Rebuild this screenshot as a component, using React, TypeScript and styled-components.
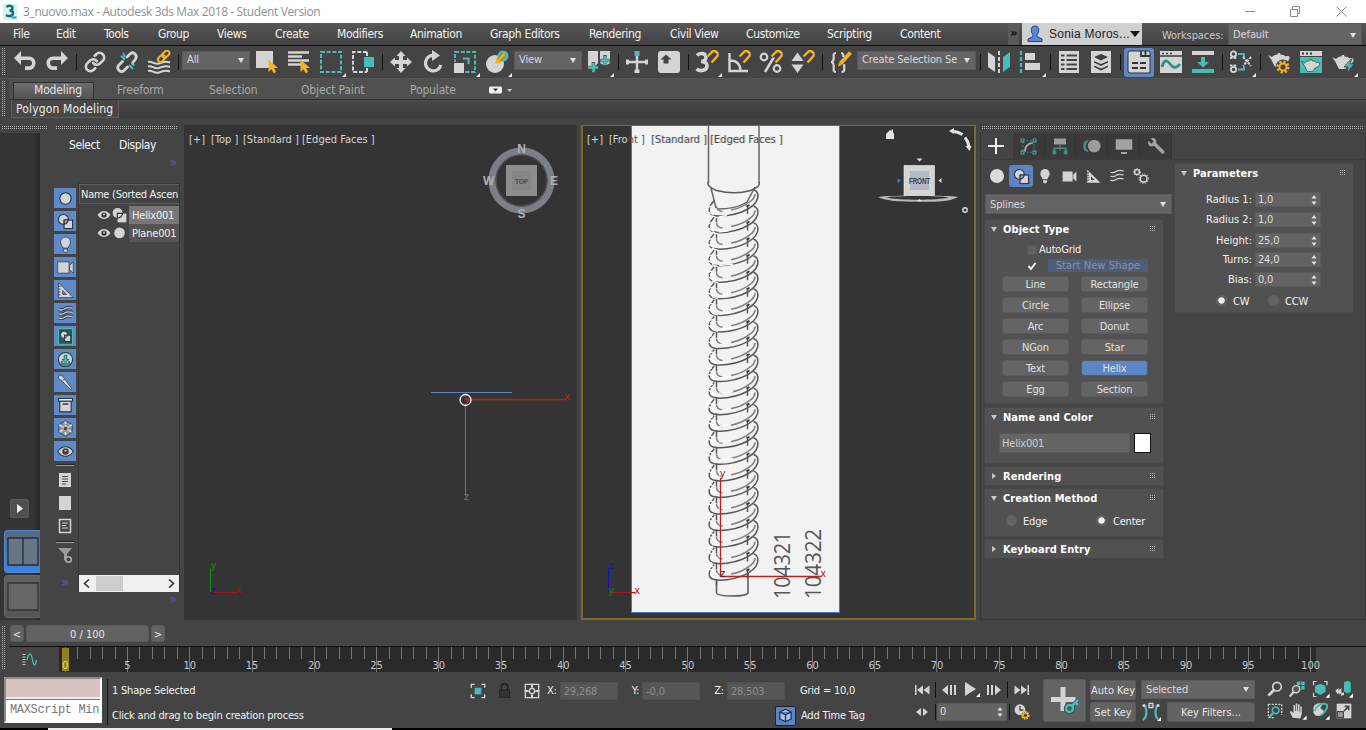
import React from 'react';
import styled, { createGlobalStyle, css } from 'styled-components';
import { Link as LinkIcon } from 'lucide-react';

const L = '#d4d4d4';
const TEAL = '#48bdb5';
const ORANGE = '#f2b326';
const UI = "'DejaVu Sans Condensed', 'DejaVu Sans', 'Noto Sans', sans-serif";

const Global = createGlobalStyle`
  * { box-sizing: border-box; }
  body { margin: 0; background: #444; overflow: hidden; }
  svg { display: block; flex: none; }
`;

const Page = styled.div`
  width: 1366px;
  height: 730px;
  display: flex;
  flex-direction: column;
  overflow: hidden;
  background: #444;
  color: #e6e6e6;
  font-family: ${UI};
  font-size: 11px;
  letter-spacing: -0.2px;
  line-height: 14px;
  white-space: nowrap;
`;

/* ---------- title bar ---------- */
const TitleBar = styled.header`
  height: 23px;
  flex: none;
  display: flex;
  align-items: center;
  background: #fff;
  color: #8f8f8f;
  font-family: 'Open Sans', 'Noto Sans', sans-serif;
  font-size: 12px;
  letter-spacing: -0.37px;
  padding-left: 2px;
`;
const TitleText = styled.span`
  margin-left: 5px;
  flex: 1;
`;
const WinButtons = styled.div`
  display: flex;
  width: 140px;
  height: 20px;
`;

/* ---------- menu bar ---------- */
const MenuBar = styled.nav`
  height: 23px;
  flex: none;
  display: flex;
  align-items: center;
  padding-left: 13px;
  background: linear-gradient(#575757, #424242);
  border-bottom: 1px solid #0c0c0c;
  color: #f2f2f2;
  font-size: 12px;
  letter-spacing: -0.35px;
`;
const MenuItem = styled.span<{ $w: number }>`
  width: ${p => p.$w}px;
  flex: none;
`;
const More = styled.span`
  width: 11px;
  height: 22px;
  background: #5a5a5a;
  font-weight: 700;
  font-size: 13px;
  line-height: 19px;
  text-align: center;
  color: #111;
  margin-right: 3px;
`;
const User = styled.span`
  width: 120px;
  height: 22px;
  background: #d0d0d0;
  color: #1c1c22;
  display: flex;
  align-items: center;
  padding-left: 4px;
  font-family: 'Liberation Sans', sans-serif;
  font-size: 12px;
  letter-spacing: 0.25px;
`;
const Workspaces = styled.span`
  margin-left: 20px;
  width: 66px;
  color: #c9c9c9;
  font-size: 11px;
  letter-spacing: -0.1px;
  padding-top: 3px;
`;

const Combo = styled.div<{ $w: number; $h?: number; $ml?: number; $mr?: number; $up?: number; $pt?: number }>`
  width: ${p => p.$w}px;
  height: ${p => p.$h || 19}px;
  margin: 0 ${p => p.$mr ?? 0}px ${p => p.$up ?? 0}px ${p => p.$ml ?? 0}px;
  flex: none;
  display: flex;
  align-items: center;
  justify-content: space-between;
  padding: ${p => p.$pt ?? 0}px 5px 0 4px;
  background: #646464;
  border: 1px solid #5a5a5a;
  color: #dadada;
  font-size: 11px;
  letter-spacing: -0.1px;
  overflow: hidden;
  &::after {
    content: '';
    border: 3.5px solid transparent;
    border-top: 5px solid #e0e0e0;
    border-bottom: 0;
    flex: none;
  }
`;

/* ---------- main toolbar ---------- */
const vgrip = css`
  background:
    repeating-linear-gradient(0deg, #444 0 1px, transparent 1px 2px),
    repeating-linear-gradient(90deg, #b0b0b0 0 1px, #444 1px 2px);
`;
const VGrip = styled.i<{ $h: number; $mt?: number }>`
  width: 4px;
  height: ${p => p.$h}px;
  margin-top: ${p => p.$mt ?? 0}px;
  flex: none;
  ${vgrip}
`;
const HGrip = styled.i<{ $w: number; $ml: number }>`
  width: ${p => p.$w}px;
  height: 4px;
  margin-left: ${p => p.$ml}px;
  flex: none;
  ${vgrip}
`;
const Toolbar = styled.div`
  height: 33px;
  flex: none;
  display: flex;
  align-items: center;
  padding-left: 2px;
  border-bottom: 1px solid #555;
`;
const ToolRow = styled.div`
  display: flex;
  height: 33px;
  margin-left: 3px;
  align-items: center;
`;
const Slot = styled.div<{ $on?: boolean; $corner?: boolean }>`
  width: 32px;
  height: 31px;
  flex: none;
  display: flex;
  align-items: center;
  justify-content: center;
  position: relative;
  &::before {
    content: '';
    position: absolute;
    inset: 1px 1px 1px 1px;
    border-radius: 3px;
    background: ${p => (p.$on ? '#5f88c4' : 'none')};
  }
  svg { position: relative; }
  ${p => p.$corner && css`
    &::after {
      content: '';
      position: absolute;
      right: 1px;
      bottom: 1px;
      border: 2px solid #eee;
      border-top-color: transparent;
      border-left-color: transparent;
    }
  `}
`;
const Sep = styled.i<{ $h?: number; $w?: number }>`
  width: ${p => p.$w ?? 6}px;
  height: ${p => p.$h ?? 16}px;
  flex: none;
  background: linear-gradient(#111, #111) center / 1px 100% no-repeat;
`;

/* ---------- ribbon ---------- */
const Ribbon = styled.div`
  height: 39px;
  flex: none;
  display: flex;
  padding: 0 0 0 2px;
`;
const RibbonBody = styled.div`
  flex: 1;
  margin-left: 3px;
`;
const TabRow = styled.div`
  height: 21px;
  display: flex;
  background: #505050;
  border-bottom: 1px solid #303030;
  color: #a9a9a9;
  font-size: 12px;
  letter-spacing: -0.15px;
  line-height: 22px;
`;
const Tab = styled.span<{ $w: number; $pl?: number; $on?: boolean }>`
  width: ${p => p.$w}px;
  padding-left: ${p => p.$pl ?? 0}px;
  flex: none;
  ${p => p.$on && css`
    height: 17px;
    margin-top: 3px;
    margin-left: 4px;
    line-height: 15px;
    color: #e2e2e2;
    background: linear-gradient(#6d6d6d, #535353);
    border: 1px solid #303030;
    border-bottom: 0;
  `}
`;
const RibbonPanels = styled.div`
  height: 18px;
  background: linear-gradient(#494949, #3a3a3a);
  display: flex;
`;
const RibbonPanel = styled.span`
  width: 108px;
  margin-left: 2px;
  padding-left: 4px;
  border: 1px solid #5e5e5e;
  border-top: 0;
  background: #474747;
  font-size: 12px;
  letter-spacing: 0.15px;
  line-height: 19px;
  color: #ececec;
`;

/* ---------- work area ---------- */
const Work = styled.main`
  height: 502px;
  flex: none;
  display: flex;
`;
const LeftDock = styled.div`
  width: 184px;
  display: flex;
  flex-direction: column;
`;
const Grips = styled.div`
  display: flex;
  padding-top: 8px;
  height: 15px;
`;
const DockCols = styled.div`
  flex: 1;
  display: flex;
`;
const LayoutStrip = styled.div`
  width: 40px;
  height: 487px;
  background: linear-gradient(90deg, #343434 80%, #292929);
  display: flex;
  flex-direction: column;
  align-items: flex-end;
  justify-content: flex-end;
  gap: 2px;
  padding-bottom: 2px;
`;
const PlayTab = styled.div`
  width: 19px;
  height: 19px;
  margin: 0 11px 10px 0;
  border-radius: 2px;
  background: #505050;
  border: 1px solid #5a5a5a;
  display: flex;
  align-items: center;
  justify-content: center;
`;
const LayoutButton = styled.div<{ $on?: boolean }>`
  width: 36px;
  height: 43px;
  border-radius: 4px 0 0 4px;
  border: 1px solid ${p => (p.$on ? '#4d8ad8' : '#666')};
  border-right: 0;
  background: ${p => (p.$on ? 'linear-gradient(#57687e, #3f83dd)' : 'linear-gradient(#606060, #555)')};
  padding: 6px 0 0 2px;
`;
const Explorer = styled.div`
  width: 144px;
  padding-left: 14px;
  display: flex;
  flex-direction: column;
`;
const ExplorerHead = styled.div`
  display: flex;
  padding: 5px 0 0 15px;
  height: 24px;
  font-size: 12px;
  letter-spacing: -0.4px;
  color: #f4f4f4;
  span { width: 50px; }
`;
const Chevrons = styled.span<{ $h: number; $pr: number }>`
  height: ${p => p.$h}px;
  text-align: right;
  padding-right: ${p => p.$pr}px;
  color: #5a57b4;
  font-size: 14px;
  line-height: 11px;
  flex: none;
`;
const ExplorerBody = styled.div`
  display: flex;
  height: 409px;
  margin-bottom: 2px;
`;
const FilterCol = styled.div`
  width: 22px;
  margin-right: 2px;
  padding-top: 5px;
  display: flex;
  flex-direction: column;
  align-items: center;
`;
const Filter = styled.div`
  width: 22px;
  height: 20px;
  margin-bottom: 3px;
  flex: none;
  background: #5e8ac7;
  display: flex;
  align-items: center;
  justify-content: center;
`;
const Rule = styled.i`
  width: 18px;
  height: 2px;
  margin-bottom: 1px;
  flex: none;
  border-top: 1px solid #222;
  background: #a0a0a0;
`;
const FilterFoot = styled.div`
  display: flex;
  flex-direction: column;
  align-items: center;
  gap: 11px;
`;
const List = styled.div`
  width: 102px;
  border: 1px solid #363636;
  border-bottom: 0;
  display: flex;
  flex-direction: column;
`;
const ListHead = styled.div`
  height: 20px;
  margin: 0 0 2px;
  border: 1px solid #606060;
  border-right: 0;
  padding-left: 1px;
  line-height: 19px;
  color: #f1f1f1;
  letter-spacing: -0.26px;
`;
const ListRow = styled.div`
  height: 18px;
  display: flex;
  align-items: center;
  padding-left: 18px;
`;
const ListName = styled.span<{ $on?: boolean }>`
  margin-left: 2px;
  flex: 1;
  height: 18px;
  padding-left: 3px;
  line-height: 19px;
  color: #f1f1f1;
  background: ${p => (p.$on ? '#787878' : '#555')};
`;
const HScroll = styled.div`
  margin-top: auto;
  height: 17px;
  background: #f0f0f0;
  display: flex;
  align-items: center;
  justify-content: space-between;
  padding: 0 4px;
  flex: none;
`;
const Thumb = styled.i`
  width: 27px;
  height: 15px;
  background: #cdcdcd;
  margin-right: 39px;
`;

const Views = styled.div`
  display: flex;
  gap: 4px;
  width: 796px;
  height: 495px;
  margin-top: 7px;
`;
const Viewport = styled.section<{ $w: number; $on?: boolean }>`
  width: ${p => p.$w}px;
  height: 495px;
  flex: none;
  position: relative;
  background: #343434;
  overflow: hidden;
  ${p => p.$on && css`
    &::after {
      content: '';
      position: absolute;
      inset: 0;
      border: 2px solid #7d6b28;
      border-top-width: 1px;
    }
  `}
`;
const ViewLabel = styled.div<{ $x: number }>`
  position: absolute;
  left: ${p => p.$x}px;
  top: 8px;
  display: flex;
  gap: 2px;
  color: #d6d6d6;
  letter-spacing: 0;
`;
const ViewPart = styled.span<{ $w: number; $dark?: boolean }>`
  width: ${p => p.$w}px;
  ${p => p.$dark && css`color: #4e4e4e; text-shadow: 1px 0 0 rgba(120, 120, 120, .35);`}
`;
const OnWhite = styled.span`
  color: #4e4e4e;
`;

/* ---------- command panel ---------- */
const Command = styled.aside`
  width: 386px;
  display: flex;
  flex-direction: column;
`;
const PanelFrame = styled.div`
  height: 487px;
  border: 1px solid #383838;
  border-top: 0;
`;
const ModeTabs = styled.div`
  display: flex;
  height: 26px;
  width: 191px;
`;
const ModeTab = styled.div<{ $on?: boolean }>`
  width: 32px;
  height: 26px;
  display: flex;
  align-items: center;
  justify-content: center;
  background: ${p => (p.$on ? '#444' : '#3a3a3a')};
  border-right: 1px solid ${p => (p.$on ? '#444' : '#333')};
`;
const PanelCols = styled.div`
  display: flex;
  border-top: 1px solid #3c3c3c;
`;
const CreateCol = styled.div`
  width: 190px;
  padding-left: 4px;
`;
const CategoryRow = styled.div`
  display: flex;
  padding: 5px 0 0 0;
  height: 34px;
`;
const Category = styled.div<{ $on?: boolean }>`
  width: 24px;
  height: 22px;
  border-radius: 3px;
  display: flex;
  align-items: center;
  justify-content: center;
  background: ${p => (p.$on ? '#5b85c4' : 'none')};
`;
const RolloutStack = styled.div`
  padding-top: 5px;
`;
const Rollout = styled.section<{ $h: number; $mb?: number }>`
  width: 180px;
  height: ${p => p.$h}px;
  margin-bottom: ${p => p.$mb ?? 4}px;
  margin-left: -1px;
  background: #515151;
  border: 1px solid #484848;
  border-radius: 2px;
  overflow: hidden;
`;
const RolloutTitle = styled.h3<{ $closed?: boolean }>`
  margin: 0;
  height: 19px;
  display: flex;
  align-items: center;
  font-size: 11px;
  font-weight: 700;
  letter-spacing: 0.08px;
  color: #fff;
  padding: 1px 7px 0 6px;
  &::before {
    content: '';
    width: 0;
    height: 0;
    margin: -2px 6px 0 0;
    border: 3px solid transparent;
    ${p => p.$closed
      ? css`border-left: 4px solid #c4c4c4; border-right: 0; margin-left: 1px; margin-right: 7px;`
      : css`border-top: 5px solid #c4c4c4; border-bottom: 0;`}
  }
  &::after {
    content: '';
    margin-left: auto;
    margin-top: -3px;
    width: 6px;
    height: 6px;
    background:
      repeating-linear-gradient(0deg, #515151 0 1px, transparent 1px 2px),
      repeating-linear-gradient(90deg, #b5b5b5 0 1px, #515151 1px 2px);
  }
`;
const CheckRow = styled.div<{ $h: number }>`
  display: flex;
  align-items: center;
  height: ${p => p.$h}px;
  padding-left: 42px;
  color: #f2f2f2;
`;
const Check = styled.i`
  width: 10px;
  height: 10px;
  margin-right: 2px;
  background: #616161;
  border: 1px solid #585858;
`;
const StartShape = styled.span`
  width: 100px;
  height: 13px;
  margin-left: 11px;
  border-radius: 2px;
  background: #4d5e7b;
  color: #8a919c;
  text-align: center;
  line-height: 13px;
  letter-spacing: 0.1px;
`;
const TypeGrid = styled.div`
  display: grid;
  grid-template-columns: 67px 67px;
  grid-auto-rows: 16px;
  column-gap: 12px;
  row-gap: 5px;
  padding: 5px 0 0 17px;
`;
const TypeButton = styled.button<{ $on?: boolean }>`
  border: 1px solid #5a5a5a;
  border-radius: 3px;
  padding: 0;
  font: 11px/15px ${UI};
  letter-spacing: -0.15px;
  color: #e0e0e0;
  background: ${p => (p.$on ? '#5b85c4' : '#646464')};
`;
const NameRow = styled.div`
  display: flex;
  padding: 6px 0 0 14px;
`;
const NameField = styled.div`
  width: 131px;
  height: 20px;
  margin-right: 4px;
  padding-left: 2px;
  background: #656565;
  border: 1px solid #595959;
  color: #cfcfcf;
  line-height: 19px;
`;
const Swatch = styled.div`
  width: 17px;
  height: 20px;
  background: #fff;
  border: 1px solid #111;
`;
const RadioRow = styled.div<{ $pt: number; $pl: number }>`
  display: flex;
  align-items: center;
  padding: ${p => p.$pt}px 0 0 ${p => p.$pl}px;
  color: #f2f2f2;
`;
const Radio = styled.label<{ $on?: boolean; $w: number }>`
  width: ${p => p.$w}px;
  display: flex;
  align-items: center;
  gap: 6px;
  &::before {
    content: '';
    width: 11px;
    height: 11px;
    margin-top: -3px;
    border-radius: 50%;
    background: ${p => (p.$on ? 'radial-gradient(circle, #f2f2f2 2.8px, #626262 3.6px)' : '#636363')};
  }
`;
const ParamCol = styled.div`
  width: 184px;
  padding: 3px 0 0 4px;
`;
const Params = styled.div`
  padding-top: 8px;
`;
const ParamRow = styled.div<{ $mb: number }>`
  display: flex;
  align-items: center;
  height: 16px;
  margin-bottom: ${p => p.$mb}px;
`;
const ParamLabel = styled.span`
  width: 78px;
  padding-right: 1px;
  padding-top: 1px;
  text-align: right;
  margin-right: 2px;
  color: #f2f2f2;
  letter-spacing: 0;
`;
const Spinner = styled.div<{ $w: number; $h?: number }>`
  width: ${p => p.$w}px;
  height: ${p => p.$h ?? 15}px;
  flex: none;
  display: flex;
  align-items: center;
  justify-content: space-between;
  padding: 1px 3px 0 2px;
  background: #636363;
  border: 1px solid #5b5b5b;
  color: #dedede;
`;

/* ---------- time line ---------- */
const Timeline = styled.div`
  height: 52px;
  flex: none;
  display: flex;
  padding: 0 0 0 2px;
`;
const TimelineBody = styled.div`
  margin-left: 3px;
  flex: 1;
`;
const SliderRow = styled.div`
  height: 26px;
  display: flex;
  gap: 2px;
  padding: 5px 0 0 1px;
`;
const SliderButton = styled.span<{ $w: number }>`
  width: ${p => p.$w}px;
  height: 17px;
  border-radius: 3px;
  background: #626262;
  border: 1px solid #5a5a5a;
  text-align: center;
  line-height: 17px;
  letter-spacing: 0;
  color: #e6e6e6;
`;
const TrackRow = styled.div`
  height: 26px;
  display: flex;
  border-top: 1px solid #0e0e0e;
`;
const MiniCurve = styled.div`
  width: 50px;
  padding: 6px 0 0 13px;
`;
const Track = styled.div`
  width: 1257px;
  height: 25px;
  display: flex;
  background: #2a2a2a;
`;
const Tick = styled.div<{ $major: boolean; $now: boolean }>`
  width: 12.455px;
  height: 25px;
  flex: none;
  display: flex;
  justify-content: center;
  align-items: flex-end;
  color: #c2c2c2;
  letter-spacing: 0;
  line-height: 13px;
  background:
    linear-gradient(#757575, #757575) center top / 1px ${p => (p.$major ? 25 : 12)}px no-repeat
    ${p => p.$now && ', linear-gradient(#8f8420, #8f8420) center 1px / 7px 23px no-repeat'};
`;
const TickLabel = styled.span<{ $now: boolean }>`
  color: ${p => (p.$now ? '#e8e044' : '#c6c6c6')};
`;

/* ---------- status bar ---------- */
const Status = styled.footer`
  height: 56px;
  flex: none;
  display: flex;
  padding: 7px 0 0 4px;
`;
const Listener = styled.div`
  width: 98px;
  height: 46px;
  margin-top: -2px;
  border: 2px solid #8b8b8b;
  border-right-color: #fff;
  border-bottom-color: #fff;
  display: flex;
  flex-direction: column;
  font: 12px/21px 'Liberation Mono', monospace;
  letter-spacing: -0.35px;
  color: #777;
`;
const ListenerOut = styled.div`
  height: 20px;
  background: #d9c2c2;
  border-bottom: 2px solid #eee;
`;
const ListenerIn = styled.div`
  flex: 1;
  background: #fff;
  border-top: 1px solid #777;
  padding-left: 4px;
`;
const Prompt = styled.div`
  width: 354px;
  padding: 5px 0 0 0;
  display: flex;
  flex-direction: column;
  gap: 11px;
  color: #f2f2f2;
`;
const Coords = styled.div`
  width: 444px;
  padding-top: 2px;
  display: flex;
  flex-direction: column;
  gap: 6px;
`;
const CoordRow = styled.div<{ $pl: number }>`
  display: flex;
  align-items: center;
  height: 19px;
  padding-left: ${p => p.$pl}px;
  color: #f0f0f0;
`;
const Field = styled.span<{ $mr: number }>`
  width: 58px;
  margin: 0 ${p => p.$mr}px 0 3px;
  height: 18px;
  background: #565656;
  border: 1px solid #505050;
  color: #8d8d8d;
  padding-left: 3px;
  line-height: 17px;
`;
const Gap = styled.span<{ $w: number }>`
  width: ${p => p.$w}px;
  flex: none;
  display: flex;
`;
const Playback = styled.div`
  width: 133px;
  display: flex;
  flex-direction: column;
  gap: 1px;
`;
const PlayRow = styled.div`
  display: flex;
  align-items: center;
  height: 21px;
`;
const PlaySlot = styled.span<{ $w: number }>`
  width: ${p => p.$w}px;
  flex: none;
  display: flex;
  justify-content: center;
`;
const BigKey = styled.div`
  width: 43px;
  height: 43px;
  margin-right: 4px;
  background: #646464;
  border: 1px solid #595959;
  border-radius: 2px;
`;
const KeyCol = styled.div<{ $w: number }>`
  width: ${p => p.$w}px;
  display: flex;
  flex-direction: column;
  gap: 2px;
  margin-top: 1px;
`;
const KeyButton = styled.div<{ $w: number }>`
  width: ${p => p.$w}px;
  height: 20px;
  border-radius: 2px;
  background: #636363;
  border: 1px solid #5a5a5a;
  text-align: center;
  line-height: 20px;
  letter-spacing: 0;
`;
const NavGrid = styled.div`
  margin-left: 7px;
  margin-top: -1px;
  display: grid;
  grid-template-columns: repeat(4, 23px);
  grid-auto-rows: 22px;
  place-items: center;
`;
const TagIcon = styled.span`
  width: 21px;
  height: 20px;
  margin-right: 5px;
  display: flex;
  align-items: center;
  justify-content: center;
  background: #5b85c4;
  border: 1px solid #222;
  border-radius: 2px;
`;
const Footer = styled.div`
  height: 2px;
  background: linear-gradient(#ececec, #ececec) 48px 0 / 344px 2px no-repeat #000;
  flex: none;
`;

/* ---------- icon helpers ---------- */
const I = ({ children, s = 24 }: { children: React.ReactNode; s?: number }) => (
  <svg width={s} height={s} viewBox="0 0 24 24" fill="none">{children}</svg>
);
const Cursor = () => <path d="M13.500 9.500v12.500l3-2.700 2 4 2.600-1.300-2-4h4z" fill={ORANGE} />;
const Magnet = () => (
  <g fill="none">
    <path d="M12.500 6.500l4-4a3.300 3.300 0 0 1 5.500 4L16.500 12.500" stroke="#444" strokeWidth="4" />
    <path d="M12.500 6.500l4-4a3.300 3.300 0 0 1 5.500 4L16.500 12.500" stroke={ORANGE} strokeWidth="2.400" />
  </g>
);
const Teapot = () => (
  <path d="M1 5l4 2c2-2 4-2.500 5.500-2.500L11 3h2l.5 1.500c2 0 4 .8 5 2 3-1 4.500 0 4 2-.5 2.500-3 4-5.500 4.500l-2.500 4H8L4.500 10z" fill={L} />
);
const wavePath = (y: number) => `M2 ${y + 1}c4 2.500 6 1 9-1s6-2 11-.500`;
const Curve = () => (
  <g stroke={L} strokeWidth="1.800">{[5, 11, 17].map(y => <path key={y} d={wavePath(y)} />)}</g>
);
const Shapes = ({ dark = '#263042' }: { dark?: string }) => (
  <g>
    <circle cx="9" cy="9" r="7" fill={L} stroke={dark} strokeWidth="1.500" />
    <rect x="10" y="10" width="12" height="12" fill={L} stroke={dark} strokeWidth="1.500" />
    <path d="M10 15.800A7 7 0 0 0 15.800 10H10z" fill="#8ba8d0" stroke={dark} strokeWidth="1.500" />
  </g>
);
const ShapesSmall = () => (
  <g>
    <circle cx="9" cy="8" r="8" fill={L} />
    <rect x="9" y="9" width="14" height="14" fill={L} />
    <path d="M8.500 16A8 8 0 0 0 17 8.500H8.500z" fill={L} stroke="#333" strokeWidth="1.800" />
  </g>
);
const Bulb = ({ d = 'none' }: { d?: string }) => (
  <g fill={L} stroke={d}>
    <path d="M12 1.500a7 7 0 0 0-7 7c0 3 2 4.500 3.500 8.500h7c1.500-4 3.500-5.500 3.500-8.500a7 7 0 0 0-7-7z" />
    <path d="M9 18.500h6v3l-2 1.500h-2l-2-1.500z" />
  </g>
);
const Camera = ({ d = 'none' }: { d?: string }) => (
  <g fill={L} stroke={d}><path d="M1 4h16v16H1z" /><path d="M18 9l5-5v16l-5-5z" /></g>
);
const Ruler = ({ d = 'none' }: { d?: string }) => (
  <g>
    <path d="M2 1v21h21zM8 12l5.500 5.500H8z" fill={L} fillRule="evenodd" stroke={d} />
    <path d="M2 6h3M2 10h3M2 14h3M2 18h3" stroke="#444" strokeWidth="1.400" />
  </g>
);
const Eye = ({ d = 'none' }: { d?: string }) => (
  <g><path d="M1 12c6-9 16-9 22 0-6 9-16 9-22 0z" fill={L} stroke={d} strokeWidth="1.500" /><circle cx="12" cy="12" r="4.500" fill="#3c3c3c" /><circle cx="12" cy="11" r="1.500" fill={L} /></g>
);
const UpDown = () => (
  <svg width="6" height="10" viewBox="0 0 6 10"><path d="M3 0L5.500 3.500H.5zM3 10L.5 6.500h5z" fill="#e2e2e2" /></svg>
);

const toolGroups: React.ReactNode[] = [
  <>
    <Slot><I><path d="M8 1v5.500h8c4 0 6.500 3 6.500 6.500s-2.500 7-6.500 7h-4v-3.800h4c2 0 3-1.400 3-3.200s-1-3-3-3H8V15L1 8z" fill={L} /></I></Slot>
    <Slot><I><path d="M16 1v5.500H8c-4 0-6.500 3-6.500 6.500S4 20 8 20h4v-3.800H8c-2 0-3-1.400-3-3.200s1-3 3-3h8V15l7-7z" fill={L} /></I></Slot>
  </>,
  <>
    <Slot><LinkIcon size={22} color={L} strokeWidth={2.900} /></Slot>
    <Slot><I><g stroke={L} strokeWidth="2.800" strokeLinecap="round"><path d="M12 7l3-3c3-3 8 1 5.500 5l-3 4M12.500 17l-3.500 3.500c-3 3-8-1.500-5.500-5l4-4" /></g><path d="M6 6l4 3.500M8 3l2 4M14 15l4 4M16.500 14l3 1" stroke={TEAL} strokeWidth="2" /></I></Slot>
    <Slot><I><g stroke={L} strokeWidth="2">{[12, 16.5, 21].map(y => <path key={y} d={`M1 ${y}c4-1.500 6 3 11 1.500s6-3 11-1`} />)}</g><g transform="rotate(-45 17 6)" stroke={ORANGE} strokeWidth="2"><rect x="9.500" y="3.500" width="8" height="5" rx="2.500" fill="#444" /><rect x="15.500" y="3.500" width="8" height="5" rx="2.500" /></g></I></Slot>
  </>,
  <>
    <Combo $w={68} $ml={1} $mr={1} $up={4}>All</Combo>
    <Slot><I><path d="M1 1h17v17H1z" fill={L} /><Cursor /></I></Slot>
    <Slot><I><path d="M1 2.500h21M1 6.500h14M1 10.500h21M1 14.500h14" stroke={L} strokeWidth="2.600" /><Cursor /></I></Slot>
    <Slot $corner><I><rect x="2" y="2" width="20" height="20" stroke={TEAL} strokeWidth="2" strokeDasharray="4 1.700" /></I></Slot>
    <Slot><I><path d="M16 2H2v20h14M16 2v4M16 22v-4" stroke={L} strokeWidth="2" strokeDasharray="4 1.700" /><path d="M13 7h10v10H13z" fill={TEAL} /></I></Slot>
  </>,
  <>
    <Slot><I><path d="M12 1l4.500 5H14v4h4V7.500l5 4.500-5 4.500V14h-4v4h2.500L12 23l-4.500-5H10v-4H6v2.500L1 12l5-4.500V10h4V6H7.500z" fill={L} /></I></Slot>
    <Slot><I><path d="M14 5.500A7.800 7.800 0 1 0 19.800 15" stroke={L} strokeWidth="3.200" /><path d="M11 0l8 5.500-8 5.500z" fill={L} /></I></Slot>
    <Slot $corner><I><rect x="2" y="2" width="20" height="20" stroke={TEAL} strokeWidth="2" strokeDasharray="4 1.700" /><path d="M0 12h12v12H0z" fill="#444" /><path d="M1 13h10v10H1z" fill={L} /><path d="M10 8.500h5.500V14" stroke={TEAL} strokeWidth="2" /></I></Slot>
    <Slot $corner><I><circle cx="10" cy="14" r="9" fill={L} /><circle cx="18" cy="6" r="5.500" fill={TEAL} /><path d="M19 4l-6 7" stroke="#b47b00" strokeWidth="4.500" /><path d="M19.500 3.500l-6 7" stroke={ORANGE} strokeWidth="2.500" /><path d="M10 14l1.500-6 5 4.500z" fill={ORANGE} /></I></Slot>
    <Combo $w={68} $ml={1} $mr={1} $up={4}>View</Combo>
    <Slot $corner><I><path d="M1 1h10v12l-5 6H1zM13 1h10v12l-5 3-5-3z" fill={L} /><path d="M6.500 12v11M1.500 17.500h10M18 5v11M12.500 10.500h11" stroke="#555" strokeWidth="3.600" /><path d="M6.500 13v9M2 17.500h9M18 6v9M13.500 10.500h9" stroke={TEAL} strokeWidth="2.500" /></I></Slot>
  </>,
  <>
    <Slot><I><path d="M12 6v16M2 12h20" stroke={L} strokeWidth="2.400" /><path d="M9.500 19.500h5V23h-5zM1 9.500h3v5H1zM20 9.500h3v5h-3z" fill={L} /><path d="M9.500 1h5v5h-5z" fill={TEAL} /></I></Slot>
    <Slot><I><rect x="1" y="1" width="22" height="22" rx="3" fill={L} /><path d="M9 4.500l5.500 5h-3v4h-5v-4h-3z" fill="#444" /></I></Slot>
  </>,
  <>
    <Slot $corner><I><path d="M2 5.500c3-3.500 9-2 9 1.500 0 3-2.500 4.500-5 4.500 3 0 6 1 6 4.500 0 4.500-6.500 6-10.500 3" stroke={L} strokeWidth="3.600" /><Magnet /></I></Slot>
    <Slot><I><path d="M2.500 3v18H21M3 10.500c7 0 10.500 4 10.500 10.500" stroke={L} strokeWidth="2.400" /><Magnet /></I></Slot>
    <Slot><I><circle cx="5" cy="7" r="3.300" stroke={L} strokeWidth="2.200" /><circle cx="18" cy="18.500" r="3.300" stroke={L} strokeWidth="2.200" /><path d="M6 22L15 7" stroke={L} strokeWidth="2.500" /><Magnet /></I></Slot>
    <Slot><I><path d="M6.500 2.500l6 8.500H.5zM6.500 23l6-8.500H.5z" fill={L} /><Magnet /></I></Slot>
  </>,
  <>
    <Slot><I><path d="M7 3C3 3 5.500 7 4.500 9.500 4 11.500 2.500 12 2 12c.5 0 2 .5 2.500 2.500C5.500 17 3 22 7 22M12 3c2 0 2.500 1.500 2.300 4M12.500 22c5 0 1.500-5 3-8" stroke={L} strokeWidth="2.200" /><path d="M21.500 2.500l-10 11" stroke={ORANGE} strokeWidth="4" /><path d="M9 16.500l1-4 3 2.500z" fill={ORANGE} /></I></Slot>
    <Combo $w={119} $ml={0} $mr={1} $up={4}>Create Selection Se</Combo>
  </>,
  <>
    <Slot><I><path d="M1 2l7 5v15l-7-5z" fill={L} /><path d="M23 2l-7 5v15l7-5z" fill={TEAL} /><path d="M12 1v22" stroke={L} strokeWidth="2" strokeDasharray="4 2" /></I></Slot>
    <Slot $corner><I><path d="M2 1v22" stroke={TEAL} strokeWidth="2.200" strokeDasharray="4 2" /><path d="M6 3h10v7H6zM6 13h15v7H6z" fill={L} /></I></Slot>
  </>,
  <>
    <Slot><I><path d="M2 1h20v22H2z" fill={L} /><path d="M4 5.500h3.500M9.500 5.500H20M4 10h3.500M9.500 10H20M4 14.500h3.500M9.500 14.500H20M4 19h3.500M9.500 19H20" stroke="#444" strokeWidth="2.200" /></I></Slot>
    <Slot><I><path d="M2 1h20v22H2z" fill={L} /><path d="M12 4l7 3-7 3.500L5 7zM5 11l7 3 7-3v1.500L12 16l-7-3.500zM5 15.500l7 3 7-3V17l-7 3.500L5 17z" fill="#3d3d3d" /></I></Slot>
  </>,
  <>
    <Slot $on><I><path d="M1 3a2 2 0 0 1 2-2h18a2 2 0 0 1 2 2v20H3a2 2 0 0 1-2-2z" fill={L} stroke="#333" /><path d="M14 1v5h9M18.500 1v5M5 13h6M13 13h6M5 18h6M13 18h6" stroke="#333" strokeWidth="1.800" /></I></Slot>
    <Slot><I><path d="M1 1h22v22H1z" fill={L} /><path d="M1 6h22M3 3.500h2M7 3.500h2M11 3.500h2" stroke="#3d3d3d" strokeWidth="1.700" /><path d="M3 17c2-8 5-7 8-3s6 5 10 0" stroke="#2b8f89" strokeWidth="2.800" /></I></Slot>
    <Slot><I><path d="M1 1h22v4H1z" fill={L} /><path d="M1 19h22v4H1zM10 7h4v5h4l-6 5.500L6 12h4z" fill={TEAL} /></I></Slot>
  </>,
  <>
    <Slot $corner><I><g fill="#444" stroke={L} strokeWidth="1.800"><circle cx="4.500" cy="4" r="2.600" /><circle cx="4.500" cy="19.500" r="2.600" /></g><path d="M9 4h6v3M9 19.500h6v-3" stroke={TEAL} strokeWidth="2" /><path d="M14 7l8 9M22 7l-8 9M1 8l7 0M1 15.500h7" stroke={L} strokeWidth="2" strokeDasharray="2.500 1.200" /></I></Slot>
  </>,
  <>
    <Slot><I><Teapot /><circle cx="16" cy="17" r="4.500" stroke="#444" strokeWidth="6" /><circle cx="16" cy="17" r="5.400" stroke={ORANGE} strokeWidth="2.400" strokeDasharray="2.200 2" /><circle cx="16" cy="17" r="3.600" stroke={ORANGE} strokeWidth="2" /></I></Slot>
    <Slot><I><path d="M1 1h22v5H1z" fill={L} /><path d="M3 3.500h2M7 3.500h2M11 3.500h2" stroke="#333" strokeWidth="1.800" /><path d="M1 7h22v16H1z" fill={TEAL} /><g transform="translate(1.500 7) scale(.85)" stroke="#333" strokeWidth=".8"><Teapot /></g></I></Slot>
    <Slot $corner><I><g transform="translate(0 2)"><Teapot /></g><path d="M20 9l-7 8h4l-1 6 7-9h-4l2-5z" fill={TEAL} stroke="#444" strokeWidth=".8" /></I></Slot>
  </>,
];

const menus: [string, number][] = [
  ['File', 43], ['Edit', 48], ['Tools', 54], ['Group', 59], ['Views', 58], ['Create', 62], ['Modifiers', 73],
  ['Animation', 80], ['Graph Editors', 99], ['Rendering', 81], ['Civil View', 76], ['Customize', 81],
  ['Scripting', 73], ['Content', 108],
];

const filters: React.ReactNode[] = [
  <circle cx="12" cy="12" r="8" fill={L} stroke="#263042" strokeWidth="1.500" />,
  <Shapes />,
  <Bulb d="#263042" />,
  <Camera d="#263042" />,
  <Ruler d="#263042" />,
  <><g stroke="#263042" strokeWidth="4.200">{[5, 11, 17].map(y => <path key={y} d={wavePath(y)} />)}</g><Curve /></>,
  <><rect x="2" y="1" width="20" height="22" fill="#2c5560" stroke={TEAL} strokeWidth="1.500" /><g transform="translate(3.500 3) scale(.72)"><Shapes dark="#222" /></g></>,
  <><circle cx="12" cy="12" r="10" fill={L} stroke="#263042" strokeWidth="1.500" /><path d="M10 6h4v6h3l-5 5-5-5h3zM6 15v5h12v-5h-2v3H8v-3z" fill={TEAL} stroke="#1d4d4a" /></>,
  <path d="M3 1l5 2 3 4 10 14-2 1L7 10 2 6zM8 9l3-2" fill={L} stroke="#263042" />,
  <><path d="M2 2h20v4H2z" fill="#eee" stroke="#263042" strokeWidth="1.500" /><path d="M4 6h16v15H4z" fill={L} stroke="#263042" strokeWidth="1.500" /><path d="M8 10h8" stroke="#263042" strokeWidth="2" /></>,
  <><path d="M12 1l9.500 5.500v11L12 23l-9.500-5.500v-11z" fill="#8a8f96" stroke="#263042" /><path d="M12 2v20M3 7l18 10M21 7L3 17" stroke="#e2e2e2" strokeWidth="2.500" strokeDasharray="4 1" /><circle cx="12" cy="12" r="3" fill="#555" /></>,
  <Eye d="#263042" />,
];

const types = ['Line', 'Rectangle', 'Circle', 'Ellipse', 'Arc', 'Donut', 'NGon', 'Star', 'Text', 'Helix', 'Egg', 'Section'];

const params: [string, string, number][] = [
  ['Radius 1:', '1,0', 4], ['Radius 2:', '1,0', 5], ['Height:', '25,0', 3], ['Turns:', '24,0', 4], ['Bias:', '0,0', 0],
];

/* Threaded rod: 23 turns, one every 16.55 units, each with a lobe on both sides. */
const Screw = () => (
  <g fill="none" stroke="#585858" strokeWidth="1.500">
    <path d="M708.500 126v57M759 126v57" stroke="#666" />
    <path d="M708.500 182c-2 3 2 6 8 8.500 12 3 24 3 34 0 8-3 10-6 8.500-8.500" />
    <path d="M711 188l5 20M755 187l-8 15c-6 4-16 7-30 7" stroke="#666" />
    {Array.from({ length: 23 }, (_, i) => (
      <g key={i} transform={`translate(0 ${197 + i * 16.55})`}>
        <path d="M753.500 -7.500c4 1.500 5 4.500 4.200 8.500-1.500 6-7 10.500-16 14-9 3.500-21 5-27.500 3.500-6-1.500-6-6-3.500-10.500l3.500-4.500" />
        <path d="M716.500 9c0 3 2 5 6 5.500M731 13c9-1.500 15-5 20.500-9.500 2.500-2 3.500-4 3.500-6.500" stroke="#808080" />
        <path d="M716.500 18v7M747.500 9v8" />
        <path d="M746.500 9.500l3-1.500" stroke="#333" strokeWidth="1.800" />
      </g>
    ))}
    <path d="M716.500 581v12c2 4 29 4 31.500 0v-20" />
  </g>
);
const HelixSpline = () => (
  <g fill="none" stroke="#fff" strokeWidth="1.300">
    {Array.from({ length: 23 }, (_, i) => {
      const y = 208 + i * 16.2;
      return <path key={i} d={`M${706 + (i % 2)} ${y}l6-2M${708} ${y + 4}l6 3M712 ${y + 8}l6 2M719 ${y + 9 - (i % 3)}l${8 + (i % 4) * 2} -1.500M710 ${y + 1}l4 2`} />;
    })}
  </g>
);

const AxisText = ({ x, y, c, children }: { x: number; y: number; c: string; children: string }) => (
  <text x={x} y={y} fill={c} fontSize="11" textAnchor="middle" fontFamily={UI}>{children}</text>
);

const TopView = () => (
  <Viewport $w={393}>
    <svg width="393" height="495" viewBox="184 125 393 495" fill="none">
      <circle cx="521.500" cy="180.500" r="29.500" stroke="#7c7f83" strokeWidth="7" />
      <circle cx="521.500" cy="180.500" r="25.500" stroke="#505459" strokeWidth="1.200" />
      <g fill="#a9b2b3" fontSize="12" fontWeight="700" textAnchor="middle" fontFamily="Liberation Sans, sans-serif">
        <text x="521.500" y="153">N</text><text x="521.500" y="218">S</text><text x="488.500" y="185">W</text><text x="554" y="185">E</text>
      </g>
      <path d="M506 165h31v31h-31z" fill="#8d8d8d" />
      <path d="M512 171h19v19h-19z" fill="#85858a" />
      <text x="521.500" y="183.500" fill="#4c4c50" fontSize="8" fontWeight="700" textAnchor="middle" fontFamily="Liberation Sans, sans-serif" textLength="13" lengthAdjust="spacingAndGlyphs">TOP</text>
      <path d="M431 392.500h81" stroke="#5c82c8" />
      <path d="M465.500 404v92" stroke="#747474" />
      <path d="M465 399.500h102" stroke="#b32121" strokeWidth="1.300" />
      <AxisText x={567} y={400} c="#c22222">x</AxisText>
      <AxisText x={466.500} y={500} c="#777">z</AxisText>
      <AxisText x={467} y={402} c="#c22222">y</AxisText>
      <circle cx="465.500" cy="400" r="5.500" stroke="#fff" strokeWidth="1.300" />
      <path d="M210.500 568v24" stroke="#178a17" /><path d="M212 592.500h26" stroke="#a31515" />
      <AxisText x={213.500} y={569} c="#178a17">y</AxisText>
      <AxisText x={213} y={594} c="#1414a0">z</AxisText>
      <AxisText x={238} y={593} c="#a31515">x</AxisText>
    </svg>
    <ViewLabel $x={5}><ViewPart $w={20}>[+]</ViewPart><ViewPart $w={30}>[Top ]</ViewPart><ViewPart $w={57}>[Standard ]</ViewPart><span>[Edged Faces ]</span></ViewLabel>
  </Viewport>
);

const FrontView = () => (
  <Viewport $w={395} $on>
    <svg width="395" height="495" viewBox="581 125 395 495" fill="none">
      <path d="M631.500 124v488.500h208V124z" fill="#f2f2f2" stroke="#4f76c4" />
      <Screw />
      <HelixSpline />
      <g fill="#565656" fontSize="22" fontFamily="'Open Sans', 'Liberation Sans', sans-serif">
        <text transform="translate(790 599) rotate(-90)" textLength="67" lengthAdjust="spacingAndGlyphs">104321</text>
        <text transform="translate(821 599) rotate(-90)" textLength="70" lengthAdjust="spacingAndGlyphs">104322</text>
      </g>
      <path d="M720.500 478v98.500H821" stroke="#c01f1f" strokeWidth="1.300" />
      <AxisText x={722.500} y={477} c="#b02020">y</AxisText>
      <AxisText x={823} y={577} c="#b02020">x</AxisText>
      <AxisText x={722.500} y={577} c="#333">z</AxisText>
      <path d="M608.500 568v24" stroke="#1414b4" strokeWidth="1.300" /><path d="M611 592.500h24" stroke="#b01515" strokeWidth="1.300" />
      <AxisText x={611} y={569} c="#1414b4">z</AxisText>
      <AxisText x={611} y={594} c="#178a17">y</AxisText>
      <AxisText x={637} y={594} c="#b01515">x</AxisText>
      <path d="M886 139v-5l4-4 1.500 1v-1.500h1.500v3l1 1v5.500z" fill="#dfe6ea" />
      <path d="M954 131.500c4 .5 6 1.500 8.500 3M965 137.500c2.500 3 3.500 5.500 4 9" stroke="#dfe3e6" strokeWidth="3" />
      <path d="M949 131l5-3v6zM965.500 146h6l-2 5z" fill="#dfe3e6" />
      <path d="M878 197c10-2 72-2 80 0-8 5-25 5-38 4.500-14 .5-34 0-42-4.500z" fill="#b9bcbe" />
      <path d="M886 197.500c8-2 56-2 63 0-12 3-50 3-63 0z" fill="#343434" />
      <path d="M904 165.500h30.500v30H904z" fill="#d4d4d4" stroke="#eee" strokeWidth=".6" />
      <path d="M910 171h19v19h-19z" fill="#b4b9c3" />
      <text x="919.500" y="184" fill="#3c4350" fontSize="9" fontWeight="700" textAnchor="middle" fontFamily="Liberation Sans, sans-serif" textLength="21" lengthAdjust="spacingAndGlyphs">FRONT</text>
      <path d="M916.500 158.500h6l-3 3zM941.500 178v5l-3-2.500zM919.500 199l3 2.500h-6z" fill="#ddd" />
      <path d="M897.500 178v5.500l3.500-3z" fill="#2f7ad0" />
      <circle cx="965" cy="210" r="2.200" stroke="#ddd" strokeWidth="1.400" />
    </svg>
    <ViewLabel $x={6}>
      <ViewPart $w={20}>[+]</ViewPart>
      <ViewPart $w={40}>[Fro<OnWhite>nt ]</OnWhite></ViewPart>
      <ViewPart $w={57} $dark>[Standard ]</ViewPart>
      <ViewPart $w={80} $dark>[Edged Faces ]</ViewPart>
    </ViewLabel>
  </Viewport>
);

export default function App() {
  return (
    <Page>
      <Global />
      <TitleBar>
        <svg width="16" height="18" viewBox="0 0 16 18">
          <path d="M1 1h14v16H1z" fill="#d4f0f0" />
          <path d="M4.500 4c2-2 6-1.500 6 1 0 1.800-1.500 2.500-3 2.500 2 0 3.500.8 3.500 2.800 0 3-4.500 3.500-7 1.700" fill="none" stroke="#0e6f78" strokeWidth="2.400" />
          <path d="M9.500 14.500h5" stroke="#19a8b0" strokeWidth="2" />
        </svg>
        <TitleText>3_nuovo.max - Autodesk 3ds Max 2018 - Student Version</TitleText>
        <WinButtons>
          <svg width="140" height="20" viewBox="1226 1 140 20" fill="none" stroke="#8a8a8a">
            <path d="M1245 10.500h10M1290.500 8.500h7v7h-7zM1292.500 8V5.500h7v7H1298M1336.500 5.500l10 10M1346.500 5.500l-10 10" />
          </svg>
        </WinButtons>
      </TitleBar>

      <MenuBar>
        {menus.map(([m, w]) => <MenuItem key={m} $w={w}>{m}</MenuItem>)}
        <More>»</More>
        <User>
          <svg width="18" height="18" viewBox="0 0 18 18"><path d="M9 1c-3 0-4 2.200-3.700 4.500C5.600 8 6.500 9.500 7 10v1.500L2 14v2.500h14V14l-5-2.500V10c.5-.5 1.400-2 1.700-4.500C13 3.200 12 1 9 1z" fill="#5d85d8" stroke="#26418c" /></svg>
          <Gap $w={5} />Sonia Moros...
          <svg width="10" height="6" viewBox="0 0 10 6"><path d="M0 0h10L5 6z" fill="#111" /></svg>
        </User>
        <Workspaces>Workspaces:</Workspaces>
        <Combo $w={134} $h={22} $pt={2}>Default</Combo>
      </MenuBar>

      <Toolbar>
        <VGrip $h={28} />
        <ToolRow>
          {toolGroups.map((g, i) => <React.Fragment key={i}>{i > 0 && <Sep />}{g}</React.Fragment>)}
        </ToolRow>
      </Toolbar>

      <Ribbon>
        <VGrip $h={37} $mt={1} />
        <RibbonBody>
          <TabRow>
            <Tab $w={81} $pl={20} $on>Modeling</Tab>
            <Tab $w={115} $pl={23}>Freeform</Tab>
            <Tab $w={92}>Selection</Tab>
            <Tab $w={109}>Object Paint</Tab>
            <Tab $w={78}>Populate</Tab>
            <svg width="26" height="21" viewBox="0 -1.500 26 21"><rect x="1" y="6" width="13" height="7" rx="1.500" fill="#eee" /><path d="M5 8h5l-2.500 3z" fill="#333" /><path d="M19 8.500h5l-2.500 3z" fill="#ccc" /></svg>
          </TabRow>
          <RibbonPanels><RibbonPanel>Polygon Modeling</RibbonPanel></RibbonPanels>
        </RibbonBody>
      </Ribbon>

      <Work>
        <LeftDock>
          <Grips><HGrip $w={45} $ml={2} /><HGrip $w={122} $ml={9} /></Grips>
          <DockCols>
            <LayoutStrip>
              <PlayTab><svg width="6" height="9" viewBox="0 0 6 9"><path d="M0 0l6 4.500L0 9z" fill="#f0f0f0" /></svg></PlayTab>
              <LayoutButton $on><svg width="32" height="29" viewBox="0 0 32 29"><path d="M1 1h30v27H1zM16 1v27" fill="#687585" stroke="#222b38" strokeWidth="1.300" /></svg></LayoutButton>
              <LayoutButton><svg width="32" height="29" viewBox="0 0 32 29"><path d="M1 1h30v27H1z" fill="#666" stroke="#333" strokeWidth="1.300" /></svg></LayoutButton>
            </LayoutStrip>
            <Explorer>
              <ExplorerHead><span>Select</span><span>Display</span></ExplorerHead>
              <Chevrons $h={26} $pr={7}>»</Chevrons>
              <ExplorerBody>
                <FilterCol>
                  {filters.map((f, i) => <Filter key={i}><I s={17}>{f}</I></Filter>)}
                  <Rule />
                  <svg width="20" height="74" viewBox="0 0 20 74" fill="none">
                    <path d="M4 6h12v14H4zM4 29h12v14H4z" fill={L} />
                    <path d="M7 9.500h6M7 12h6M7 14.500h6M7 17h4" stroke="#444" />
                    <path d="M4.500 52.500h11v13h-11z" stroke={L} strokeWidth="1.500" /><path d="M7 56h6M7 58.500h4M7 61h6" stroke={L} />
                  </svg>
                  <Rule />
                  <FilterFoot>
                    <svg width="20" height="22" viewBox="0 0 20 22"><path d="M3 4h14l-5 6v8l-3-2v-6z" fill="#9b9b9b" /><circle cx="13.500" cy="15.500" r="2.800" fill="#444" stroke="#aaa" strokeWidth="1.600" /></svg>
                    <Chevrons $h={12} $pr={0}>»</Chevrons>
                  </FilterFoot>
                </FilterCol>
                <List>
                  <ListHead>Name (Sorted Ascen</ListHead>
                  <ListRow><I s={14}><Eye /></I><Gap $w={1} /><I s={15}><ShapesSmall /></I><ListName $on>Helix001</ListName></ListRow>
                  <ListRow><I s={14}><Eye /></I><Gap $w={1} /><I s={15}><circle cx="12" cy="11" r="8.500" fill={L} /></I><ListName>Plane001</ListName></ListRow>
                  <HScroll>
                    <svg width="7" height="9" viewBox="0 0 7 9"><path d="M6 .5l-4.500 4L6 8.500" fill="none" stroke="#333" strokeWidth="1.600" /></svg>
                    <Thumb />
                    <svg width="7" height="9" viewBox="0 0 7 9"><path d="M1 .5l4.500 4L1 8.500" fill="none" stroke="#333" strokeWidth="1.600" /></svg>
                  </HScroll>
                </List>
              </ExplorerBody>
              <Chevrons $h={12} $pr={7}>»</Chevrons>
            </Explorer>
          </DockCols>
        </LeftDock>

        <Views>
          <TopView />
          <FrontView />
        </Views>

        <Command>
          <Grips><HGrip $w={382} $ml={2} /></Grips>
          <PanelFrame>
            <ModeTabs>
              <ModeTab $on><I s={20}><path d="M12 2.500v19M2.500 12h19" stroke="#eee" strokeWidth="2.400" /></I></ModeTab>
              <ModeTab><I s={17}><path d="M4 4h16v16H4z" stroke="#3c8580" strokeWidth="1.500" strokeDasharray="3 2" /><path d="M1.500 1.500h4v4h-4zM18.500 1.500h4v4h-4zM1.500 18.500h4v4h-4zM18.500 18.500h4v4h-4z" stroke="#4ba39d" fill="#3a3a3a" strokeWidth="1.500" /><path d="M7 19c0-7 4-11 11-12" stroke="#aaa" strokeWidth="2.500" /></I></ModeTab>
              <ModeTab><I s={18}><path d="M4 2h16v8H4z" fill="#9c9c9c" /><path d="M12 10v5M4 19v-4h16v4M12 15v3" stroke="#429089" strokeWidth="1.700" /><path d="M2 18h5v5H2zM17 18h5v5h-5z" fill="#429089" /></I></ModeTab>
              <ModeTab><I s={18}><circle cx="15" cy="12" r="8.500" fill="#9c9c9c" /><path d="M7 4a10 10 0 0 0 0 16M3.500 5.500a10 10 0 0 0 0 13" stroke="#429089" strokeWidth="1.800" /></I></ModeTab>
              <ModeTab><I s={18}><path d="M1 3h22v14H1zM8 20h8v2.500H8z" fill="#a3a3a3" /></I></ModeTab>
              <ModeTab><I s={18}><path d="M11 10l10 10" stroke="#a3a3a3" strokeWidth="4.500" strokeLinecap="round" /><path d="M2 5l4 4 3-3-4-4c5-2 9 2 7 7l-3 3C4 14 0 10 2 5z" fill="#a3a3a3" /></I></ModeTab>
            </ModeTabs>
            <PanelCols>
              <CreateCol>
                <CategoryRow>
                  <Category><I s={16}><circle cx="12" cy="12" r="10.500" fill="#dcdcdc" /></I></Category>
                  <Category $on><I s={17}><Shapes /></I></Category>
                  <Category><I s={16}><Bulb /></I></Category>
                  <Category><I s={15}><Camera /></I></Category>
                  <Category><I s={15}><Ruler /></I></Category>
                  <Category><I s={16}><Curve /></I></Category>
                  <Category><I s={16}><g stroke="#dcdcdc" strokeWidth="2"><circle cx="6" cy="6" r="3.500" /><circle cx="16" cy="16" r="5" /></g><g stroke="#dcdcdc" strokeWidth="1.600" strokeDasharray="1.700 2"><circle cx="6" cy="6" r="5" /><circle cx="16" cy="16" r="7" /></g></I></Category>
                </CategoryRow>
                <Combo $w={187} $h={20} $pt={1}>Splines</Combo>
                <RolloutStack>
                  <Rollout $h={185} $mb={3}>
                    <RolloutTitle>Object Type</RolloutTitle>
                    <CheckRow $h={21}><Check />AutoGrid</CheckRow>
                    <CheckRow $h={11}>
                      <svg width="10" height="10" viewBox="0 0 10 10"><path d="M1.500 5l2.500 3 4.500-6" fill="none" stroke="#f2f2f2" strokeWidth="2" /></svg>
                      <StartShape>Start New Shape</StartShape>
                    </CheckRow>
                    <TypeGrid>{types.map(t => <TypeButton key={t} $on={t === 'Helix'}>{t}</TypeButton>)}</TypeGrid>
                  </Rollout>
                  <Rollout $h={57} $mb={2}>
                    <RolloutTitle>Name and Color</RolloutTitle>
                    <NameRow><NameField>Helix001</NameField><Swatch /></NameRow>
                  </Rollout>
                  <Rollout $h={20} $mb={2}><RolloutTitle $closed>Rendering</RolloutTitle></Rollout>
                  <Rollout $h={49} $mb={2}>
                    <RolloutTitle>Creation Method</RolloutTitle>
                    <RadioRow $pt={7} $pl={21}><Radio $w={90}>Edge</Radio><Radio $w={60} $on>Center</Radio></RadioRow>
                  </Rollout>
                  <Rollout $h={20}><RolloutTitle $closed>Keyboard Entry</RolloutTitle></Rollout>
                </RolloutStack>
              </CreateCol>
              <ParamCol>
                <Rollout $h={150}>
                  <RolloutTitle>Parameters</RolloutTitle>
                  <Params>
                    {params.map(([l, v, mb]) => (
                      <ParamRow key={l} $mb={mb}><ParamLabel>{l}</ParamLabel><Spinner $w={66}>{v}<UpDown /></Spinner></ParamRow>
                    ))}
                  </Params>
                  <RadioRow $pt={8} $pl={41}><Radio $w={52} $on>CW</Radio><Radio $w={60}>CCW</Radio></RadioRow>
                </Rollout>
              </ParamCol>
            </PanelCols>
          </PanelFrame>
        </Command>
      </Work>

      <Timeline>
        <VGrip $h={44} $mt={6} />
        <TimelineBody>
          <SliderRow><SliderButton $w={14}>&lt;</SliderButton><SliderButton $w={123}>0 / 100</SliderButton><SliderButton $w={14}>&gt;</SliderButton></SliderRow>
          <TrackRow>
            <MiniCurve>
              <svg width="16" height="13" viewBox="0 0 16 13" fill="none"><path d="M2 1v12" stroke="#ccc" strokeWidth="3" strokeDasharray="1 1.500" /><path d="M5 7c2-8 4-8 5.500 0s3 5 4 0" stroke={TEAL} strokeWidth="1.300" /></svg>
            </MiniCurve>
            <Track>
              {Array.from({ length: 101 }, (_, i) => (
                <Tick key={i} $major={i % 5 === 0} $now={i === 0}>
                  {i % 5 === 0 ? <TickLabel $now={i === 0}>{i}</TickLabel> : null}
                </Tick>
              ))}
            </Track>
          </TrackRow>
        </TimelineBody>
      </Timeline>

      <Status>
        <Listener><ListenerOut /><ListenerIn>MAXScript Min</ListenerIn></Listener>
        <Sep $h={46} $w={10} />
        <Prompt><span>1 Shape Selected</span><span>Click and drag to begin creation process</span></Prompt>
        <Coords>
          <CoordRow $pl={4}>
            <I s={16}><path d="M2 7V2h5M17 2h5v5M22 17v5h-5M7 22H2v-5" stroke={L} strokeWidth="2" /><path d="M7 7h10v10H7z" fill={TEAL} /></I>
            <Gap $w={11} />
            <I s={15}><path d="M4 11h16v12H4z" fill="#333" stroke="#1c1c1c" /><path d="M7 11V6a5 5 0 0 1 10 0v5" stroke="#222" strokeWidth="2.500" /></I>
            <Gap $w={12} />
            <I s={16}><path d="M2 2h20v20H2z" stroke={L} strokeWidth="2" /><circle cx="12" cy="12" r="4" stroke={L} strokeWidth="2" /><path d="M12 1v6M12 17v6M1 12h6M17 12h6" stroke={L} strokeWidth="3" /></I>
            <Gap $w={7} />
            X:<Field $mr={14}>29,268</Field>Y:<Field $mr={14}>-0,0</Field>Z:<Field $mr={15}>28,503</Field>Grid = 10,0
          </CoordRow>
          <CoordRow $pl={309}>
            <TagIcon><I s={15}><path d="M12 2l9 4.500v11L12 22l-9-4.500v-11zM3 6.500l9 4.500 9-4.500M12 11v11" stroke="#1c2c48" strokeWidth="2" fill="#a9c3e8" /></I></TagIcon>
            Add Time Tag
          </CoordRow>
        </Coords>
        <Playback>
          <PlayRow>
            <PlaySlot $w={24}><svg width="15" height="12" viewBox="0 0 15 12"><path d="M0 1h1.500v10H0zM8 1.500v9L2 6zM14.500 1.500v9l-6-4.500z" fill={L} /></svg></PlaySlot>
            <Sep $w={3} />
            <PlaySlot $w={24}><svg width="14" height="12" viewBox="0 0 14 12"><path d="M6 1v10L0 6zM8 1h2v10H8zM12 1h2v10h-2z" fill={L} /></svg></PlaySlot>
            <PlaySlot $w={21}><svg width="16" height="15" viewBox="0 0 16 15"><path d="M1 0l11 7-11 7z" fill={L} /><path d="M16 11v4h-4z" fill="#fff" /></svg></PlaySlot>
            <PlaySlot $w={24}><svg width="14" height="12" viewBox="0 0 14 12"><path d="M8 1v10l6-5zM4 1h2v10H4zM0 1h2v10H0z" fill={L} /></svg></PlaySlot>
            <Sep $w={3} />
            <PlaySlot $w={24}><svg width="15" height="12" viewBox="0 0 15 12"><path d="M13.500 1H15v10h-1.500zM7 1.500v9L13 6zM.5 1.500v9l6-4.500z" fill={L} /></svg></PlaySlot>
          </PlayRow>
          <PlayRow>
            <PlaySlot $w={24}><svg width="12" height="8" viewBox="0 0 12 8"><path d="M5 0v8L0 4zM7 0v8l5-4z" fill={L} /></svg></PlaySlot>
            <Sep $w={3} /><Spinner $w={70} $h={18}>0<UpDown /></Spinner><Sep $w={4} />
            <Gap $w={3} />
            <I s={16}><circle cx="9" cy="8.500" r="8" fill={L} /><path d="M9 3v6h5" stroke="#444" strokeWidth="2" /><circle cx="17" cy="17" r="5" fill="#444" stroke={ORANGE} strokeWidth="3" strokeDasharray="2.500 1.200" /><circle cx="17" cy="17" r="3.500" stroke={ORANGE} strokeWidth="2" /></I>
          </PlayRow>
        </Playback>
        <BigKey>
          <svg width="41" height="41" viewBox="0 0 41 41" fill="none"><path d="M16.500 7h5v10h10v5h-10v9h-5v-9H7v-5h9.500z" fill={L} /><circle cx="25.500" cy="28.500" r="3.500" stroke="#33504e" strokeWidth="4.500" /><path d="M28 26l6-6" stroke="#33504e" strokeWidth="4" /><circle cx="25.500" cy="28.500" r="3.500" stroke={TEAL} strokeWidth="2.500" /><path d="M28 26l6-6M31 22l3 3" stroke={TEAL} strokeWidth="2.500" /></svg>
        </BigKey>
        <KeyCol $w={51}><KeyButton $w={46}>Auto Key</KeyButton><KeyButton $w={46}>Set Key</KeyButton></KeyCol>
        <KeyCol $w={115}>
          <Combo $w={114}>Selected</Combo>
          <PlayRow>
            <Gap $w={26}><svg width="22" height="20" viewBox="0 0 22 20" fill="none"><path d="M2 18c4-3 4-9 2-15M16 3c-2 6-2 12 1 14" stroke={TEAL} strokeWidth="2.200" /><path d="M4 3.500h14" stroke="#8a4a4a" /><path d="M8 1.500h4v4H8z" stroke={L} strokeWidth="1.300" /><circle cx="3" cy="3.500" r="1.600" fill={L} /><circle cx="17" cy="3.500" r="1.600" fill={L} /><path d="M20 15v4h-4z" fill="#fff" /></svg></Gap>
            <KeyButton $w={88}>Key Filters...</KeyButton>
          </PlayRow>
        </KeyCol>
        <NavGrid>
          <I s={16}><circle cx="15" cy="8.500" r="6.500" stroke={L} strokeWidth="2.400" /><path d="M10.500 13.500L2 22" stroke={L} strokeWidth="4" /></I>
          <I s={17}><path d="M11 1h11v11H11z" fill={TEAL} /><path d="M16.500 1v11M11 6.500h11" stroke="#333" /><circle cx="10" cy="11.500" r="5" fill="#555" stroke={L} strokeWidth="2" /><path d="M7 15l-6 7" stroke={L} strokeWidth="3" /></I>
          <I s={18}><path d="M2 7V2h4M16 2h4v5M6 22H2v-5" stroke={L} strokeWidth="1.600" /><path d="M11 5l7 3v8l-7 4-7-4V8z" fill={TEAL} /><path d="M23.500 18v5.500H18z" fill="#fff" /></I>
          <I s={18}><path d="M12 3l5-2 4 2v13l-5 2-4-3z" fill={TEAL} /><path d="M0 14l5-4v3l4-3v8l-4 2v-2l-2 1z" fill={L} stroke="#444" strokeWidth=".8" /><path d="M8 18l4-2v4l-4 1z" fill={L} /><path d="M24 18v5.500h-5.500z" fill="#fff" /></I>
          <I s={16}><path d="M2 2h20v16M2 2v20h8" stroke={L} strokeWidth="2" strokeDasharray="3 2" /><circle cx="13" cy="11" r="5" stroke={TEAL} strokeWidth="2.400" /><path d="M9 15l-5 6" stroke={TEAL} strokeWidth="3.500" /></I>
          <I s={18}><path d="M5 21L1 13l2-1 3 3V4h2v8h1V2h2v10h1V3h2v10h1V6h2v10l-2 6z" fill={L} /><path d="M23.500 18v5.500H18z" fill="#fff" /></I>
          <I s={18}><path d="M2 6c4-5 8-5 12-3l-3 5 5 4c-3 8-12 9-14 2z" fill={L} /><path d="M4 12C5 4 15 1 19 3s-2 12-8 15" stroke={TEAL} strokeWidth="2.500" /><path d="M23.500 18v5.500H18z" fill="#fff" /></I>
          <I s={16}><path d="M1 1h22v22H1z" fill={L} /><path d="M2 13h9v9H2z" fill="#999" stroke="#444" strokeWidth="1.800" /><path d="M13 5h6v6M19 5l-7 7" stroke="#444" strokeWidth="2.400" /></I>
        </NavGrid>
      </Status>
      <Footer />
    </Page>
  );
}
